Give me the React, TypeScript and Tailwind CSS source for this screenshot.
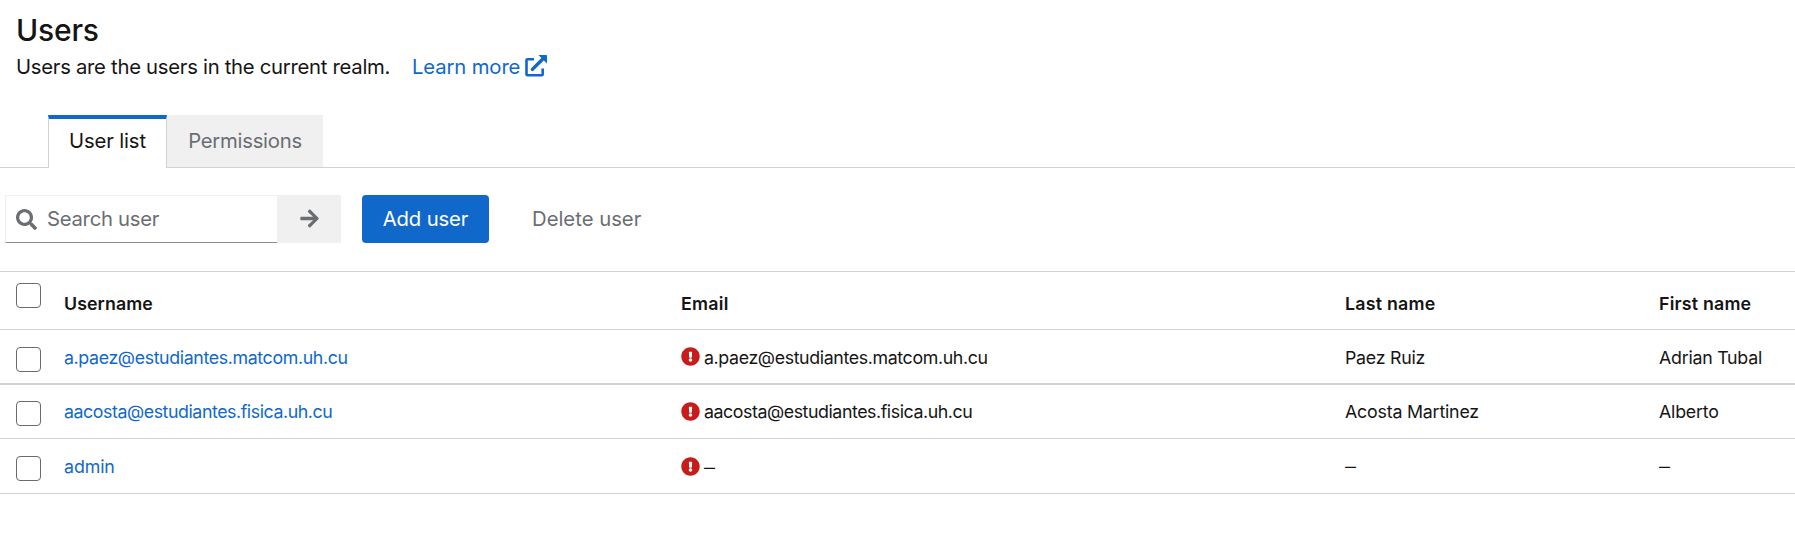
import { FaSearch, FaArrowRight, FaExclamationCircle } from "react-icons/fa";

const users = [
  { username: "a.paez@estudiantes.matcom.uh.cu", email: "a.paez@estudiantes.matcom.uh.cu", last: "Paez Ruiz", first: "Adrian Tubal", row: "h-[55px] border-b-2", pad: "pt-[2px]", box: "pt-[5px]", ls: "tracking-[-0.37px]", names: "tracking-[-0.25px]" },
  { username: "aacosta@estudiantes.fisica.uh.cu", email: "aacosta@estudiantes.fisica.uh.cu", last: "Acosta Martinez", first: "Alberto", row: "h-[54px] border-b", pad: "pt-[1px]", box: "pt-[4px]", ls: "tracking-[-0.44px]", names: "tracking-[-0.2px]" },
  { username: "admin", email: "–", last: "–", first: "–", row: "h-[55px] border-b", pad: "pt-[2px]", box: "pt-[5px]", ls: "tracking-[-0.1px]", names: "tracking-[-0.1px]" },
];

const grid = "grid grid-cols-[64px_617px_664px_314px_1fr] items-center border-[#d2d2d2]";

function Box() {
  return <input type="checkbox" className="block size-[25px] appearance-none rounded-[4px] border border-[#6b6b6b] bg-white" />;
}

function ExternalLink() {
  return (
    <svg viewBox="0 0 22 22" className="size-[22px]" fill="none" stroke="currentColor">
      <path d="M9 4.2H2.5a1 1 0 0 0-1 1v14.1a1 1 0 0 0 1 1h14.2a1 1 0 0 0 1-1V13.5" strokeWidth="2.6" />
      <path d="M7.4 14.4L18 3.8" strokeWidth="3.4" strokeLinecap="round" />
      <path d="M13.4 0h8a.6.6 0 0 1 .6.6V8.6z" fill="currentColor" stroke="none" />
    </svg>
  );
}

function Value({ text, className }: { text: string; className: string }) {
  return <span className={text === "–" ? "text-[22px] font-light leading-6" : className}>{text}</span>;
}

export default function App() {
  return (
    <main className="h-[536px] w-full overflow-hidden bg-white font-['Inter',sans-serif] text-[20.3px] text-[#151515]">
      <header className="h-[115px] pl-4 pt-[12px]">
        <h1 className="h-[37px] text-[30px] font-medium leading-[37px] tracking-[-0.2px]">Users</h1>
        <div className="flex h-[36px] items-center">
          <p className="w-[396px] whitespace-nowrap tracking-[-0.28px]">Users are the users in the current realm.</p>
          <a className="flex items-center gap-[5px] whitespace-nowrap tracking-[-0.13px] text-[#1068cb]">
            Learn more
            <span className="-mt-[2px]"><ExternalLink /></span>
          </a>
        </div>
      </header>
      <nav className="flex h-[53px] text-[20.3px] leading-[26px]">
        <div className="w-12 border-b border-[#d2d2d2]" />
        <button className="w-[119px] whitespace-nowrap border-x border-t-4 border-[#d2d2d2] border-t-[#1068cb] pb-[5px] tracking-[-0.15px]">User list</button>
        <button className="w-[156px] whitespace-nowrap border-b border-[#d2d2d2] bg-[#f0f0f0] tracking-[-0.25px] text-[#6a6e73]">Permissions</button>
        <div className="flex-1 border-b border-[#d2d2d2]" />
      </nav>
      <section className="flex h-[103px] items-start pl-[5px] pt-[27px] leading-[26px]">
        <div className="flex h-12 w-[272px] items-center gap-[10px] border border-r-0 border-[#f0f0f0] border-b-[#8a8d90] pl-[10px] text-[#6a6e73]">
          <FaSearch className="size-[21px]" />
          <span className="whitespace-nowrap tracking-[-0.27px]">Search user</span>
        </div>
        <button className="flex h-12 w-[64px] items-center justify-center bg-[#f0f0f0] pb-[1px] text-[#6a6e73]">
          <FaArrowRight className="size-[21px]" />
        </button>
        <button className="ml-[21px] h-12 w-[127px] whitespace-nowrap rounded-[4px] bg-[#1068cb] tracking-[-0.15px] text-white">Add user</button>
        <button className="ml-[43px] h-12 whitespace-nowrap text-[#6a6e73]">Delete user</button>
      </section>
      <section className="text-[17.8px] leading-6">
        <div className={`${grid} h-[59px] border-y text-[17.8px] font-semibold`}>
          <div className="self-start pl-4 pt-[11px]"><Box /></div>
          <span className="pt-[6px] tracking-[0.08px]">Username</span>
          <span className="pt-[6px] tracking-[0.25px]">Email</span>
          <span className="pt-[6px] tracking-[0.22px]">Last name</span>
          <span className="pt-[6px] tracking-[0.2px]">First name</span>
        </div>
        {users.map((u) => (
          <div key={u.username} className={`${grid} ${u.row}`}>
            <div className={`pl-4 ${u.box}`}><Box /></div>
            <a className={`${u.pad} ${u.ls} text-[#1068cb]`}>{u.username}</a>
            <div className={`flex items-center gap-[4px] ${u.pad}`}>
              <FaExclamationCircle className="mt-[-2px] size-[19px] text-[#c71c1a]" />
              <Value text={u.email} className={u.ls} />
            </div>
            <div className={u.pad}><Value text={u.last} className={u.names} /></div>
            <div className={u.pad}><Value text={u.first} className={u.names} /></div>
          </div>
        ))}
      </section>
    </main>
  );
}
